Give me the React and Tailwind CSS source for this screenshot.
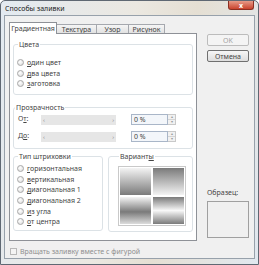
import React from "react";

const colorOptions = [
  { first: "о", rest: "дин цвет" },
  { first: "д", rest: "ва цвета" },
  { first: "з", rest: "аготовка" },
];

const hatchOptions = [
  { first: "г", rest: "оризонтальная" },
  { first: "в", rest: "ертикальная" },
  { first: "д", rest: "иагональная 1" },
  { first: "д", rest: "иагональная 2" },
  { first: "и", rest: "з угла" },
  { first: "о", rest: "т центра" },
];

const tiles = [
  "bg-[linear-gradient(to_bottom,#f4f4f4,#7a7a7a)]",
  "bg-[linear-gradient(to_bottom,#7a7a7a,#f4f4f4)]",
  "bg-[linear-gradient(to_bottom,#f4f4f4,#7a7a7a_55%,#dcdcdc)]",
  "bg-[linear-gradient(to_bottom,#7a7a7a,#f8f8f8_50%,#7a7a7a)]",
];

const Radio = ({ first, rest }) => (
  <div className="flex h-[10.7px] items-center gap-[3px]">
    <span className="h-[7px] w-[7px] shrink-0 rounded-full border border-[#a8a8a8] bg-[radial-gradient(circle_at_40%_35%,#ffffff,#d9d9d9)]" />
    <span className="leading-none">
      <span className="underline">{first}</span>
      {rest}
    </span>
  </div>
);

const GroupBox = ({ legend, className, children }) => (
  <fieldset className={`rounded-[3px] border border-[#dce2e6] ${className}`}>
    <legend className="ml-[1px] px-[1px] leading-[9px]">{legend}</legend>
    {children}
  </fieldset>
);

const SliderRow = ({ label }) => (
  <div className="flex h-[11px] items-center">
    <span className="w-[27px] pl-[4px]">{label}</span>
    <div className="flex h-[10px] w-[75px] items-center justify-between bg-[#e6e6e6] px-[2px] text-[6px] leading-none text-[#8c8c8c]">
      <span>‹</span>
      <span>›</span>
    </div>
    <div className="ml-[15px] flex h-[11px]">
      <div className="flex w-[37px] items-center border border-[#a9b6c8] bg-[#f3f6fa] pl-[2px] leading-none">
        0 %
      </div>
      <div className="flex w-[8px] flex-col border border-l-0 border-[#c9c9c9] bg-[#f1f1f1] text-[4px] leading-none text-[#9a9a9a]">
        <span className="flex flex-1 items-center justify-center border-b border-[#d4d4d4]">▴</span>
        <span className="flex flex-1 items-center justify-center">▾</span>
      </div>
    </div>
  </div>
);

const App = () => {
  return (
    <div className="flex h-[265px] w-[259px] flex-col overflow-hidden rounded-t-[5px] border border-[#5f6873] bg-[linear-gradient(100deg,#e3eaf1,#ebe8e1_45%,#e5dfd3_65%,#e1e8ef)] font-['Noto_Sans',sans-serif] text-[7px] text-[#444]">
      <div className="flex h-[14px] shrink-0 justify-between pl-[4px]">
        <span className="self-center leading-none text-[#1c1c1c]">Способы заливки</span>
        <div className="mr-[4px] flex h-[9px] w-[26px] items-center justify-center rounded-b-[3px] border border-t-0 border-[#8a2f22] bg-[linear-gradient(to_bottom,#e79b88,#c9432d)] text-[7px] font-bold leading-none text-white">
          x
        </div>
      </div>

      <div className="mx-[3px] mb-[5px] flex flex-1 flex-col border border-[#97a1ab] bg-[#f0f0f0]">
        <div className="flex pl-[4px] pt-[5px]">
          <div className="flex w-[188px] flex-col">
            <div className="flex h-[12px] items-end">
              <div className="relative z-10 -mb-px flex h-[12px] w-[48px] items-center justify-center border border-b-0 border-[#8e9197] bg-white leading-none">
                Градиентная
              </div>
              <div className="flex h-[9px] w-[40px] items-center justify-center border border-l-0 border-b-0 border-[#a5a8ae] bg-[linear-gradient(to_bottom,#f5f5f5,#e1e1e1)] leading-none">
                Текстура
              </div>
              <div className="flex h-[9px] w-[32px] items-center justify-center border border-l-0 border-b-0 border-[#a5a8ae] bg-[linear-gradient(to_bottom,#f5f5f5,#e1e1e1)] leading-none">
                Узор
              </div>
              <div className="flex h-[9px] w-[36px] items-center justify-center border border-l-0 border-b-0 border-[#a5a8ae] bg-[linear-gradient(to_bottom,#f5f5f5,#e1e1e1)] leading-none">
                Рисунок
              </div>
            </div>

            <div className="flex h-[208px] flex-col border border-[#8e9197] bg-white px-[3px] pt-[6px]">
              <GroupBox legend="Цвета" className="h-[55px] pl-[3px] pt-[8px]">
                {colorOptions.map((o) => (
                  <Radio key={o.rest} {...o} />
                ))}
              </GroupBox>

              <GroupBox legend="Прозрачность" className="mt-[8px] h-[46px] pt-[2px]">
                <div className="flex flex-col gap-[6px]">
                  <SliderRow
                    label={
                      <>
                        О<span className="underline">т</span>:
                      </>
                    }
                  />
                  <SliderRow
                    label={
                      <>
                        Д<span className="underline">о</span>:
                      </>
                    }
                  />
                </div>
              </GroupBox>

              <div className="mt-[3px] flex gap-[5px]">
                <GroupBox legend="Тип штриховки" className="h-[79px] w-[90px] pl-[3px] pt-[2px]">
                  {hatchOptions.map((o) => (
                    <Radio key={o.rest} {...o} />
                  ))}
                </GroupBox>
                <GroupBox
                  legend={
                    <>
                      Вариант<span className="underline">ы</span>
                    </>
                  }
                  className="h-[80px] flex-1 pl-[9px] pt-[5px]"
                >
                  <div className="grid h-[60px] w-[68px] grid-cols-2 grid-rows-2 gap-[2px] border border-[#c9c9c9] bg-white p-px">
                    {tiles.map((t) => (
                      <div key={t} className={t} />
                    ))}
                  </div>
                </GroupBox>
              </div>
            </div>
          </div>

          <div className="ml-[10px] flex w-[42px] flex-col pt-[13px]">
            <div className="flex h-[12px] items-center justify-center rounded-[2px] border border-[#bcbcbc] bg-[#f4f4f4] leading-none text-[#a3a3a3]">
              OK
            </div>
            <div className="mt-[4px] flex h-[12px] items-center justify-center rounded-[2px] border border-[#707070] bg-[linear-gradient(to_bottom,#f6f6f6,#dddddd)] leading-none">
              Отмена
            </div>
            <span className="mt-[127px] leading-none">Образец:</span>
            <div className="mt-[5px] h-[37px] border border-[#a0a0a0] bg-[#f0f0f0]" />
          </div>
        </div>

        <div className="mt-[7px] flex items-center gap-[3px] pl-[5px] text-[#8f8f8f]">
          <span className="h-[7px] w-[7px] border border-[#b8b8b8] bg-[#f4f4f4]" />
          <span className="leading-none">Вращать заливку вместе с фигурой</span>
        </div>
      </div>
    </div>
  );
};

export default App;
